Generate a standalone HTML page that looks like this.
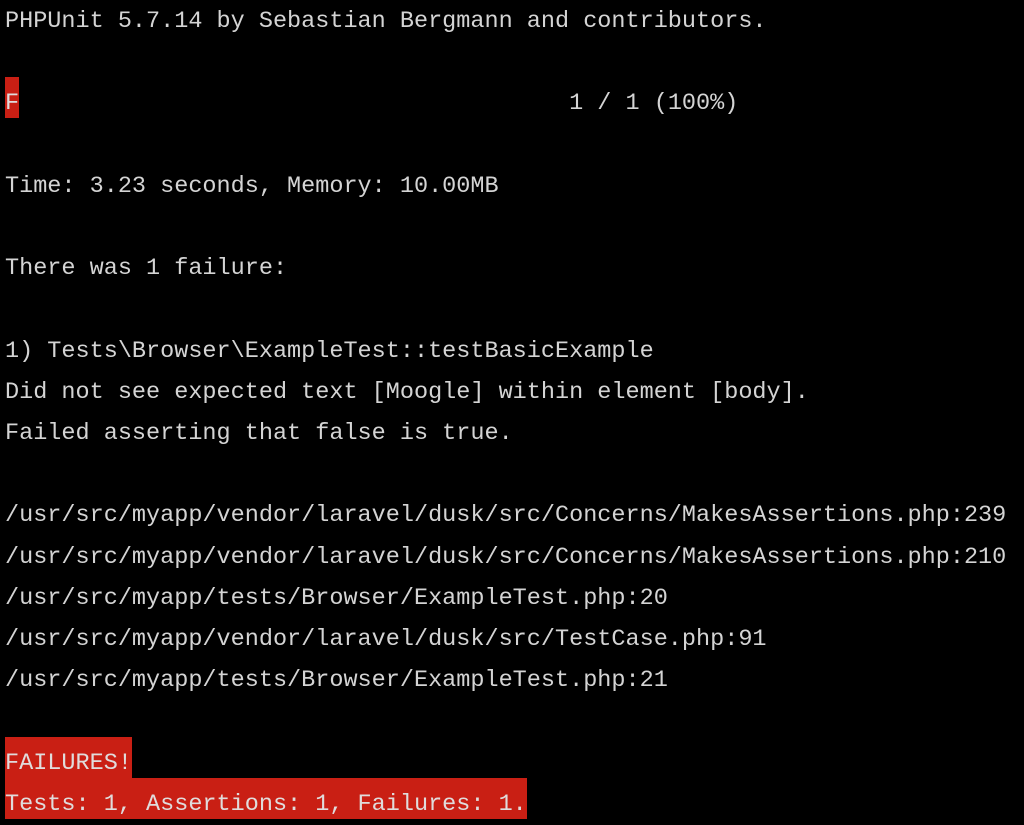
<!DOCTYPE html>
<html><head><style>
html,body{margin:0;padding:0;background:#000;width:1024px;height:825px;overflow:hidden}
pre{margin:0;position:absolute;left:5px;top:1px;font-family:"Liberation Mono","DejaVu Sans Mono",monospace;font-size:23.5px;line-height:41.2px;color:#d4d4d4}
.r{background:#c91f14;color:#e0dcdc;display:inline-block;height:35px;padding-top:6px;position:relative;top:-6px;vertical-align:top;overflow:visible}
</style></head><body>
<pre>PHPUnit 5.7.14 by Sebastian Bergmann and contributors.

<span class="r">F</span>                                       1 / 1 (100%)

Time: 3.23 seconds, Memory: 10.00MB

There was 1 failure:

1) Tests\Browser\ExampleTest::testBasicExample
Did not see expected text [Moogle] within element [body].
Failed asserting that false is true.

/usr/src/myapp/vendor/laravel/dusk/src/Concerns/MakesAssertions.php:239
/usr/src/myapp/vendor/laravel/dusk/src/Concerns/MakesAssertions.php:210
/usr/src/myapp/tests/Browser/ExampleTest.php:20
/usr/src/myapp/vendor/laravel/dusk/src/TestCase.php:91
/usr/src/myapp/tests/Browser/ExampleTest.php:21

<span class="r">FAILURES!</span>
<span class="r">Tests: 1, Assertions: 1, Failures: 1.</span></pre>
</body></html>
